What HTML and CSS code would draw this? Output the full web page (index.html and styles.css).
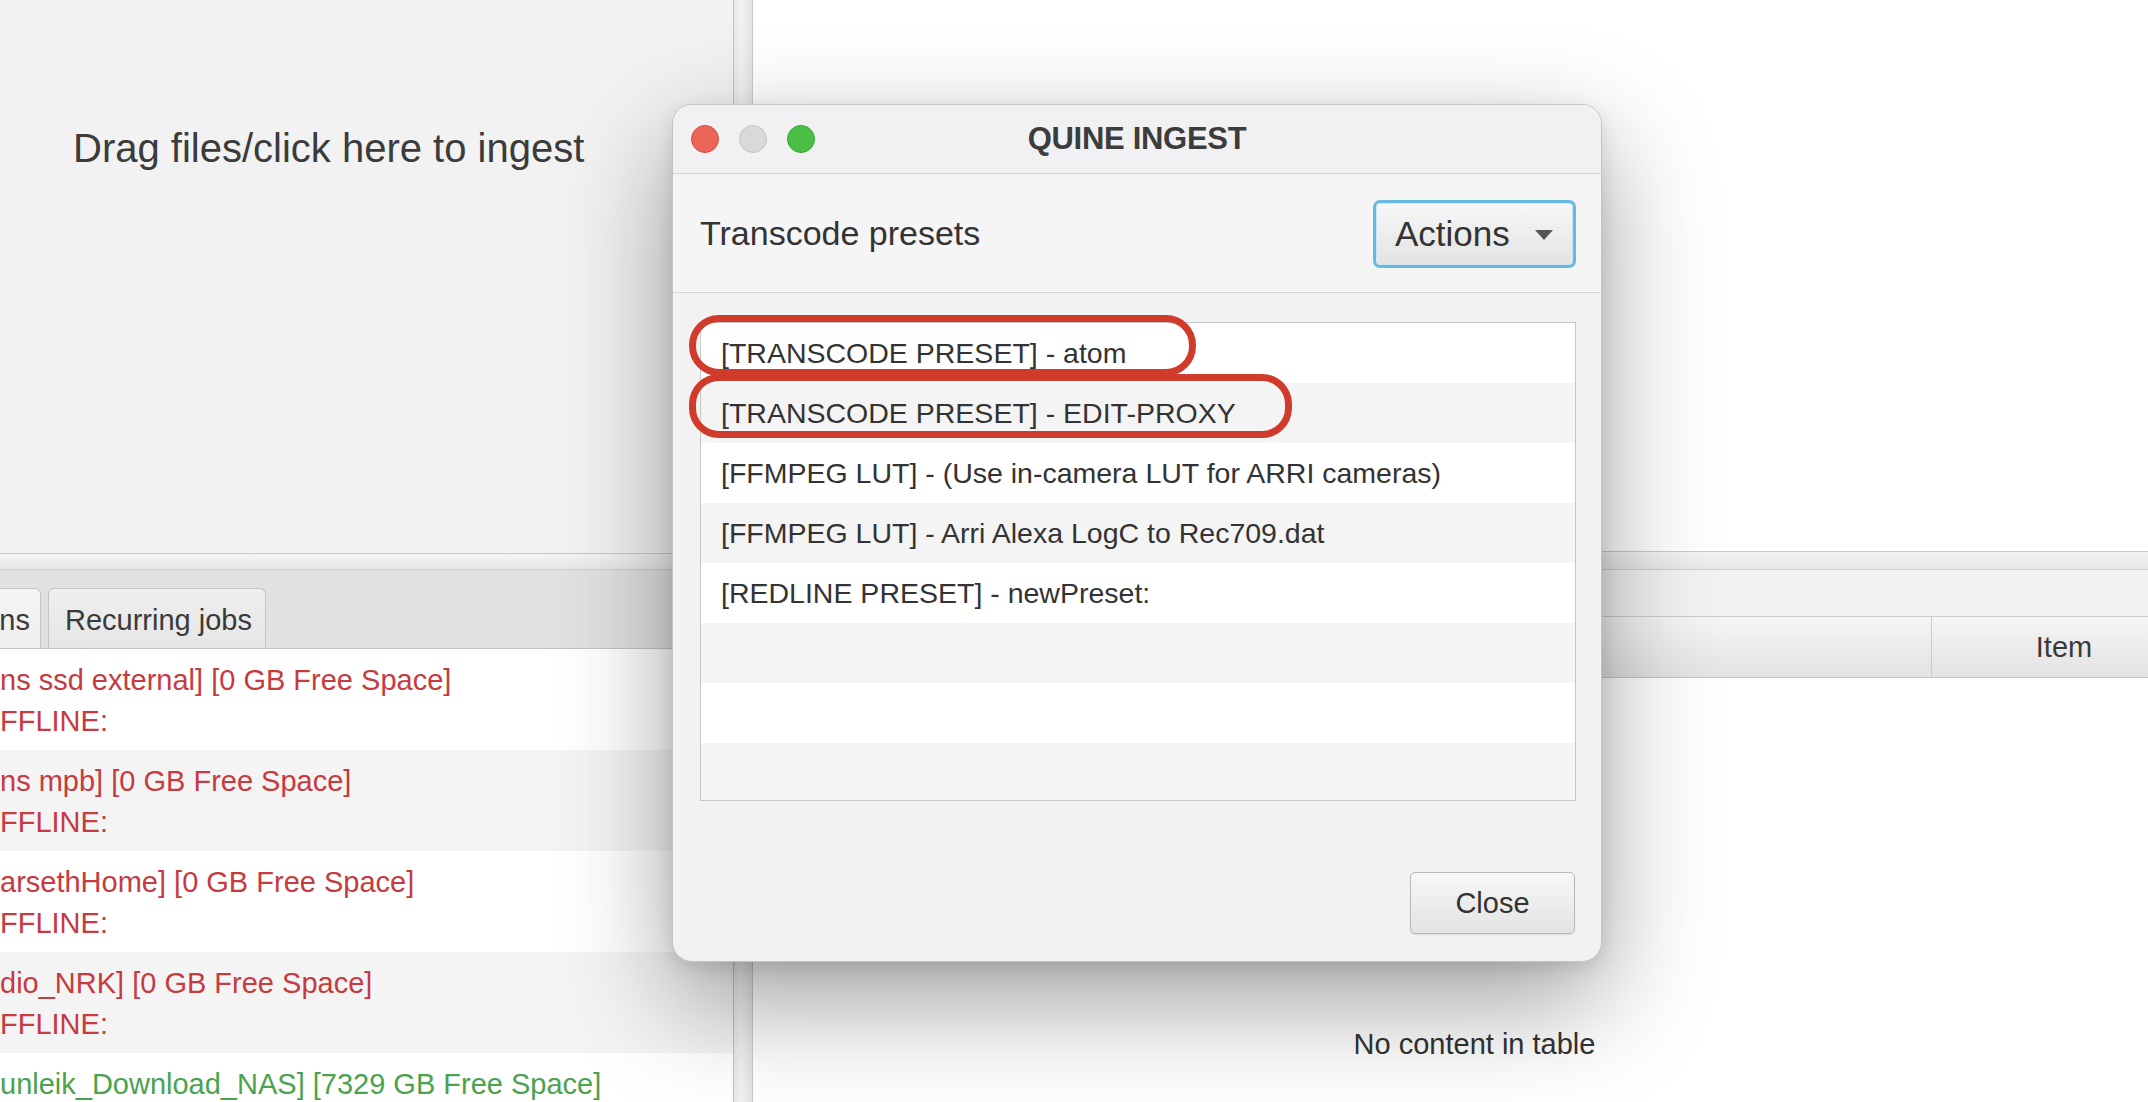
FILE: index.html
```html
<!DOCTYPE html>
<html lang="en">
<head>
  <meta charset="UTF-8">
  <meta name="viewport" content="width=device-width, initial-scale=1.0">
  <title>Quine Ingest</title>
  <link rel="stylesheet" href="styles.css">
</head>
<body>
  <div class="app">
    <div class="pane-left">
      <div class="drop-zone">Drag files/click here to ingest</div>
      <div class="split-h"></div>
      <div class="tab-header">
        <div class="tab tab-selected">ns</div>
        <div class="tab">Recurring jobs</div>
      </div>
      <div class="drive-list">
        <div class="drive offline">
          <div>ns ssd external] [0 GB Free Space]</div>
          <div>FFLINE:</div>
        </div>
        <div class="drive offline">
          <div>ns mpb] [0 GB Free Space]</div>
          <div>FFLINE:</div>
        </div>
        <div class="drive offline">
          <div>arsethHome] [0 GB Free Space]</div>
          <div>FFLINE:</div>
        </div>
        <div class="drive offline">
          <div>dio_NRK] [0 GB Free Space]</div>
          <div>FFLINE:</div>
        </div>
        <div class="drive online">
          <div>unleik_Download_NAS] [7329 GB Free Space]</div>
        </div>
      </div>
    </div>

    <div class="split-v"></div>

    <div class="pane-right">
      <div class="preview"></div>
      <div class="split-h split-h-right"></div>
      <div class="tab-strip"></div>
      <div class="table-head">
        <div class="col col-main"></div>
        <div class="col col-item">Item</div>
      </div>
      <div class="table-empty">No content in table</div>
    </div>
  </div>

  <!-- 预设窗口 -->
  <div class="dialog">
    <div class="titlebar">
      <div class="lights">
        <span class="light light-red"></span>
        <span class="light light-gray"></span>
        <span class="light light-green"></span>
      </div>
      <div class="title">QUINE INGEST</div>
    </div>

    <div class="dialog-head">
      <div class="head-label">Transcode presets</div>
      <button class="btn btn-actions">Actions <span class="caret"></span></button>
    </div>

    <div class="dialog-body">
      <ul class="preset-list">
        <li>[TRANSCODE PRESET] - atom</li>
        <li>[TRANSCODE PRESET] - EDIT-PROXY</li>
        <li>[FFMPEG LUT] - (Use in-camera LUT for ARRI cameras)</li>
        <li>[FFMPEG LUT] - Arri Alexa LogC to Rec709.dat</li>
        <li>[REDLINE PRESET] - newPreset:</li>
        <li></li>
        <li></li>
        <li></li>
      </ul>
      <div class="dialog-foot">
        <button class="btn btn-close">Close</button>
      </div>
    </div>

    <span class="mark mark-first"></span>
    <span class="mark mark-second"></span>
  </div>
</body>
</html>
```

FILE: styles.css
```css
body {
  font-family: "Liberation Sans", Arial, sans-serif;
  margin: 0;
  width: 2148px;
  height: 1102px;
  overflow: hidden;
  background-color: #f2f2f2;
  color: #333;
  position: relative;
}

.app {
  display: flex;
  height: 1102px;
}

/* 左侧 */
.pane-left {
  width: 733px;
  flex: none;
  display: flex;
  flex-direction: column;
  overflow: hidden;
}

.drop-zone {
  height: 553px;
  flex: none;
  box-sizing: border-box;
  padding: 124px 0 0 73px;
  font-size: 40px;
  line-height: 48px;
  color: #3b3b3b;
  background-color: #f2f2f2;
}

.split-h {
  height: 17px;
  flex: none;
  box-sizing: border-box;
  border-top: 1px solid #c9c9c9;
  border-bottom: 1px solid #d0d0d0;
  background: linear-gradient(to bottom, #f3f3f3, #e8e8e8);
}

.split-h-right {
  height: 19px;
}

.tab-header {
  height: 79px;
  flex: none;
  box-sizing: border-box;
  display: flex;
  align-items: flex-end;
  gap: 7px;
  background-color: #e1e1e1;
  border-bottom: 1px solid #c4c4c4;
}

.tab {
  height: 60px;
  box-sizing: border-box;
  display: flex;
  align-items: center;
  padding: 4px 13px 0 16px;
  font-size: 29px;
  color: #3a3a3a;
  background: linear-gradient(to bottom, #efefef, #e6e6e6);
  border: 1px solid #c3c3c3;
  border-bottom: none;
  border-radius: 6px 6px 0 0;
}

.tab-selected {
  width: 41px;
  flex: none;
  justify-content: flex-end;
  padding-left: 0;
  padding-right: 10px;
  border-left: none;
  border-radius: 0 6px 0 0;
  background: linear-gradient(to bottom, #f5f5f5, #eeeeee);
}

.drive-list {
  flex: none;
  background-color: #fff;
}

.drive {
  height: 101px;
  box-sizing: border-box;
  padding-top: 11px;
  font-size: 29px;
  line-height: 41px;
  white-space: nowrap;
  overflow: hidden;
}

.drive:nth-child(even) {
  background-color: #f4f4f4;
}

.offline {
  color: #c63a40;
}

.online {
  color: #4ba24f;
}

.split-v {
  width: 20px;
  flex: none;
  box-sizing: border-box;
  border-left: 1px solid #c3c3c3;
  border-right: 1px solid #c9c9c9;
  background: linear-gradient(to right, #e9e9e9, #f1f1f1 40%, #e4e4e4);
}

/* 右侧 */
.pane-right {
  width: 1443px;
  flex: none;
  display: flex;
  flex-direction: column;
  background-color: #fff;
}

.preview {
  height: 551px;
  flex: none;
  background-color: #fff;
}

.tab-strip {
  height: 46px;
  flex: none;
  background-color: #f2f2f2;
}

.table-head {
  height: 62px;
  flex: none;
  box-sizing: border-box;
  display: flex;
  border-top: 1px solid #cdcdcd;
  border-bottom: 1px solid #c6c6c6;
  background: linear-gradient(to bottom, #f5f5f5, #e3e3e3);
}

.col {
  display: flex;
  align-items: center;
  justify-content: center;
  font-size: 29px;
  color: #3a3a3a;
}

.col-main {
  width: 1178px;
  border-right: 1px solid #cbcbcb;
}

.col-item {
  flex: 1;
}

.table-empty {
  padding-top: 349px;
  font-size: 29px;
  line-height: 34px;
  text-align: center;
  color: #333;
}

/* 弹窗 */
.dialog {
  position: absolute;
  left: 672px;
  top: 104px;
  width: 930px;
  height: 858px;
  box-sizing: border-box;
  display: flex;
  flex-direction: column;
  background-color: #f2f2f2;
  border: 1px solid #c4c4c4;
  border-radius: 20px;
  overflow: hidden;
  box-shadow: 0 40px 110px rgba(0, 0, 0, 0.38), 0 6px 18px rgba(0, 0, 0, 0.1);
}

.titlebar {
  height: 69px;
  flex: none;
  box-sizing: border-box;
  display: grid;
  grid-template-columns: 1fr auto 1fr;
  align-items: center;
  background-color: #f1f1f4;
  border-bottom: 1px solid #d3d3d3;
}

.lights {
  display: flex;
  gap: 20px;
  padding-left: 18px;
}

.light {
  width: 28px;
  height: 28px;
  box-sizing: border-box;
  border-radius: 50%;
}

.light-red {
  background-color: #ec6559;
  border: 1px solid #d6493f;
}

.light-gray {
  background-color: #d9d9dc;
  border: 1px solid #c3c3c6;
}

.light-green {
  background-color: #4bbf45;
  border: 1px solid #38a535;
}

.title {
  font-size: 31px;
  font-weight: 700;
  color: #3c3c3c;
  letter-spacing: -0.3px;
}

.dialog-head {
  height: 119px;
  flex: none;
  box-sizing: border-box;
  display: flex;
  align-items: center;
  justify-content: space-between;
  padding: 1px 25px 0 27px;
  background-color: #f5f5f5;
  border-bottom: 1px solid #d6d6d6;
}

.head-label {
  font-size: 34px;
  color: #333;
}

.btn {
  font-family: "Liberation Sans", Arial, sans-serif;
  color: #333;
  background: linear-gradient(to bottom, #f7f7f7, #e3e3e3);
  cursor: pointer;
}

.btn-actions {
  width: 203px;
  height: 68px;
  display: flex;
  align-items: center;
  justify-content: space-between;
  padding: 0 20px 0 19px;
  font-size: 35px;
  border: 3px solid #68b8e4;
  border-radius: 7px;
  box-shadow: inset 0 0 0 1px #cfe3f0;
}

.caret {
  width: 0;
  height: 0;
  border-left: 9px solid transparent;
  border-right: 9px solid transparent;
  border-top: 10px solid #555;
  margin-top: 2px;
}

.dialog-body {
  flex: 1;
  display: flex;
  flex-direction: column;
  padding: 29px 25px 27px 27px;
}

.preset-list {
  list-style: none;
  margin: 0;
  padding: 0;
  height: 479px;
  flex: none;
  box-sizing: border-box;
  border: 1px solid #c7c7c7;
  background-color: #fff;
  overflow: hidden;
}

.preset-list li {
  height: 60px;
  box-sizing: border-box;
  display: flex;
  align-items: center;
  padding-left: 20px;
  font-size: 28.5px;
  color: #333;
  white-space: nowrap;
}

.preset-list li:nth-child(even) {
  background-color: #f4f4f4;
}

.dialog-foot {
  margin-top: auto;
  display: flex;
  justify-content: flex-end;
  padding-right: 1px;
}

.btn-close {
  width: 165px;
  height: 62px;
  font-size: 29px;
  border: 1px solid #b9b9b9;
  border-radius: 5px;
  box-shadow: 0 1px 1px rgba(0, 0, 0, 0.08);
}

/* 红框标注 */
.mark {
  position: absolute;
  left: 16px;
  box-sizing: border-box;
  border: 7px solid #d13b2c;
  border-radius: 30px;
}

.mark-first {
  top: 210px;
  width: 507px;
  height: 61px;
}

.mark-second {
  top: 269px;
  width: 603px;
  height: 64px;
}
```
